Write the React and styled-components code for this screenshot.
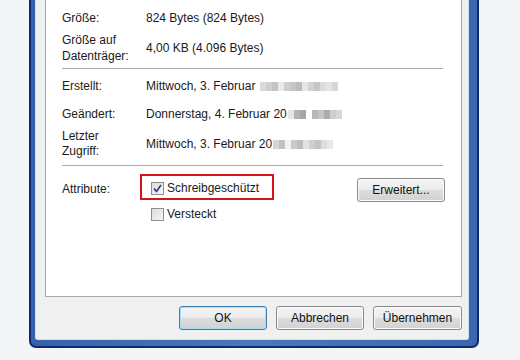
import React from 'react';
import styled, { createGlobalStyle } from 'styled-components';

const GlobalStyle = createGlobalStyle`
    html, body {
        margin:0;
        padding:0;
        background:#f4f5f7;
    }
    body {
        font-family:"Liberation Sans", Arial, sans-serif;
        font-size:12px;
        color:#1a1a1a;
    }
`;

const Page = styled.div`
    width:520px;
    height:360px;
    padding-left:29px;
    box-sizing:border-box;
    background:#f4f5f7;
    overflow:hidden;
`;
const FrameOuter = styled.div`
    width:450px;
    padding:0 2px 2px 2px;
    box-sizing:border-box;
    background:#12296a;
    border-radius:0 0 7px 7px;
`;
const FrameBlue = styled.div`
    padding:0 8px 6px 4px;
    background:linear-gradient(90deg, #3563ab, #4a78bd 50%, #3a68b0);
    border-radius:0 0 5px 5px;
`;
const FrameLight = styled.div`
    border:1px solid #d3dff0;
    border-top:none;
    border-radius:0 0 3px 3px;
`;
const Dialog = styled.div`
    background:#f0f0f0;
    padding:0 6px 9px 9px;
`;
const Panel = styled.div`
    height:297px;
    box-sizing:border-box;
    background:#fff;
    border:1px solid #a7a7a7;
    border-top:none;
    padding:10px 18px 0 16px;
`;
const InfoRow = styled.div`
    display:grid;
    grid-template-columns:84px 1fr;
    align-items:center;
    margin-top:${p => p.$gap || 0}px;
    line-height:${p => p.$lh || 16}px;
    white-space:nowrap;
`;
const Label = styled.div``;
const Value = styled.div``;
const Separator = styled.div`
    height:1px;
    background:#a9a9a9;
    margin-top:${p => p.$gap}px;
`;
const Mosaic = styled.span`
    display:inline-flex;
    height:9px;
    margin-left:1px;
    vertical-align:-1px;
`;
const Cell = styled.span`
    width:6px;
    height:9px;
    background:${p => p.$shade};
`;
const Attributes = styled.div`
    display:grid;
    grid-template-columns:89px auto 1fr;
    align-items:start;
    margin-top:8px;
    line-height:16px;
`;
const AttrLabel = styled.div`
    margin-top:7px;
`;
const CheckList = styled.div`
    display:flex;
    flex-direction:column;
    align-items:flex-start;
`;
const Highlight = styled.div`
    display:flex;
    align-items:center;
    gap:3px;
    margin-left:-11px;
    padding:4px 13px 2px 9px;
    border:2px solid #d3141d;
`;
const CheckItem = styled.div`
    display:flex;
    align-items:center;
    gap:3px;
    margin-top:${p => p.$gap || 0}px;
`;
const Box = styled.span`
    width:11px;
    height:11px;
    border:1px solid #8e8f8f;
    background:linear-gradient(135deg, #dcdcdc, #f6f6f6);
    display:flex;
    align-items:center;
    justify-content:center;
`;
const Button = styled.button`
    width:${p => p.$w || 88}px;
    height:24px;
    padding:0;
    font-family:"Liberation Sans", Arial, sans-serif;
    font-size:12px;
    color:#111;
    border:1px solid ${p => p.$primary ? '#3c7fb1' : '#8a8a8a'};
    border-radius:3px;
    background:linear-gradient(#f4f4f4 0%, #ececec 48%, #dcdcdc 52%, #d2d2d2 100%);
    box-shadow:inset 0 0 0 1px ${p => p.$primary ? '#a9dcf5' : '#fbfbfb'};
`;
const SideButton = styled(Button)`
    justify-self:end;
    margin-top:4px;
    margin-right:-2px;
`;
const ButtonBar = styled.div`
    display:flex;
    justify-content:flex-end;
    gap:9px;
    margin-top:9px;
`;

const Blur = ({ shades }) => (
    <Mosaic>
        {shades.map((s, i) => <Cell key={i} $shade={s} />)}
    </Mosaic>
);

const Check = () => (
    <svg width="9" height="9" viewBox="0 0 9 9">
        <path d="M1 4.5 L3.5 7.5 L8 1" fill="none" stroke="#283c7a" strokeWidth="1.6" />
    </svg>
);

export default function App() {
    return (
        <Page>
            <GlobalStyle />
            <FrameOuter>
                <FrameBlue>
                    <FrameLight>
                        <Dialog>
                            <Panel>
                                <InfoRow>
                                    <Label>Größe:</Label>
                                    <Value>824 Bytes (824 Bytes)</Value>
                                </InfoRow>
                                <InfoRow $gap={6}>
                                    <Label>Größe auf<br />Datenträger:</Label>
                                    <Value>4,00 KB (4.096 Bytes)</Value>
                                </InfoRow>
                                <Separator $gap={4} />
                                <InfoRow $gap={9}>
                                    <Label>Erstellt:</Label>
                                    <Value>Mittwoch, 3. Februar <Blur shades={['#dadada', '#cfcfcf', '#c3c3c3', '#e9e9e9', '#cecece', '#c6c6c6', '#bcbcbc', '#e6e6e6', '#d2d2d2', '#c6c6c6', '#dcdcdc', '#e4e4e4', '#d6d6d6']} /></Value>
                                </InfoRow>
                                <InfoRow $gap={12}>
                                    <Label>Geändert:</Label>
                                    <Value>Donnerstag, 4. Februar 20<Blur shades={['#e6e6e6', '#b4b4b4', '#a6a6a6', '#ffffff', '#b8b8b8', '#c4c4c4', '#acacac', '#cdcdcd', '#d8d8d8']} /></Value>
                                </InfoRow>
                                <InfoRow $gap={7} $lh={15}>
                                    <Label>Letzter<br />Zugriff:</Label>
                                    <Value>Mittwoch, 3. Februar 20<Blur shades={['#d4d4d4', '#c2c2c2', '#f2f2f2', '#cacaca', '#bdbdbd', '#e2e2e2', '#cfcfcf', '#c4c4c4', '#dedede', '#e8e8e8']} /></Value>
                                </InfoRow>
                                <Separator $gap={6} />
                                <Attributes>
                                    <AttrLabel>Attribute:</AttrLabel>
                                    <CheckList>
                                        <Highlight>
                                            <Box><Check /></Box>
                                            <span>Schreibgeschützt</span>
                                        </Highlight>
                                        <CheckItem $gap={6}>
                                            <Box />
                                            <span>Versteckt</span>
                                        </CheckItem>
                                    </CheckList>
                                    <SideButton>Erweitert...</SideButton>
                                </Attributes>
                            </Panel>
                            <ButtonBar>
                                <Button $primary>OK</Button>
                                <Button>Abbrechen</Button>
                                <Button $w={89}>Übernehmen</Button>
                            </ButtonBar>
                        </Dialog>
                    </FrameLight>
                </FrameBlue>
            </FrameOuter>
        </Page>
    );
}
